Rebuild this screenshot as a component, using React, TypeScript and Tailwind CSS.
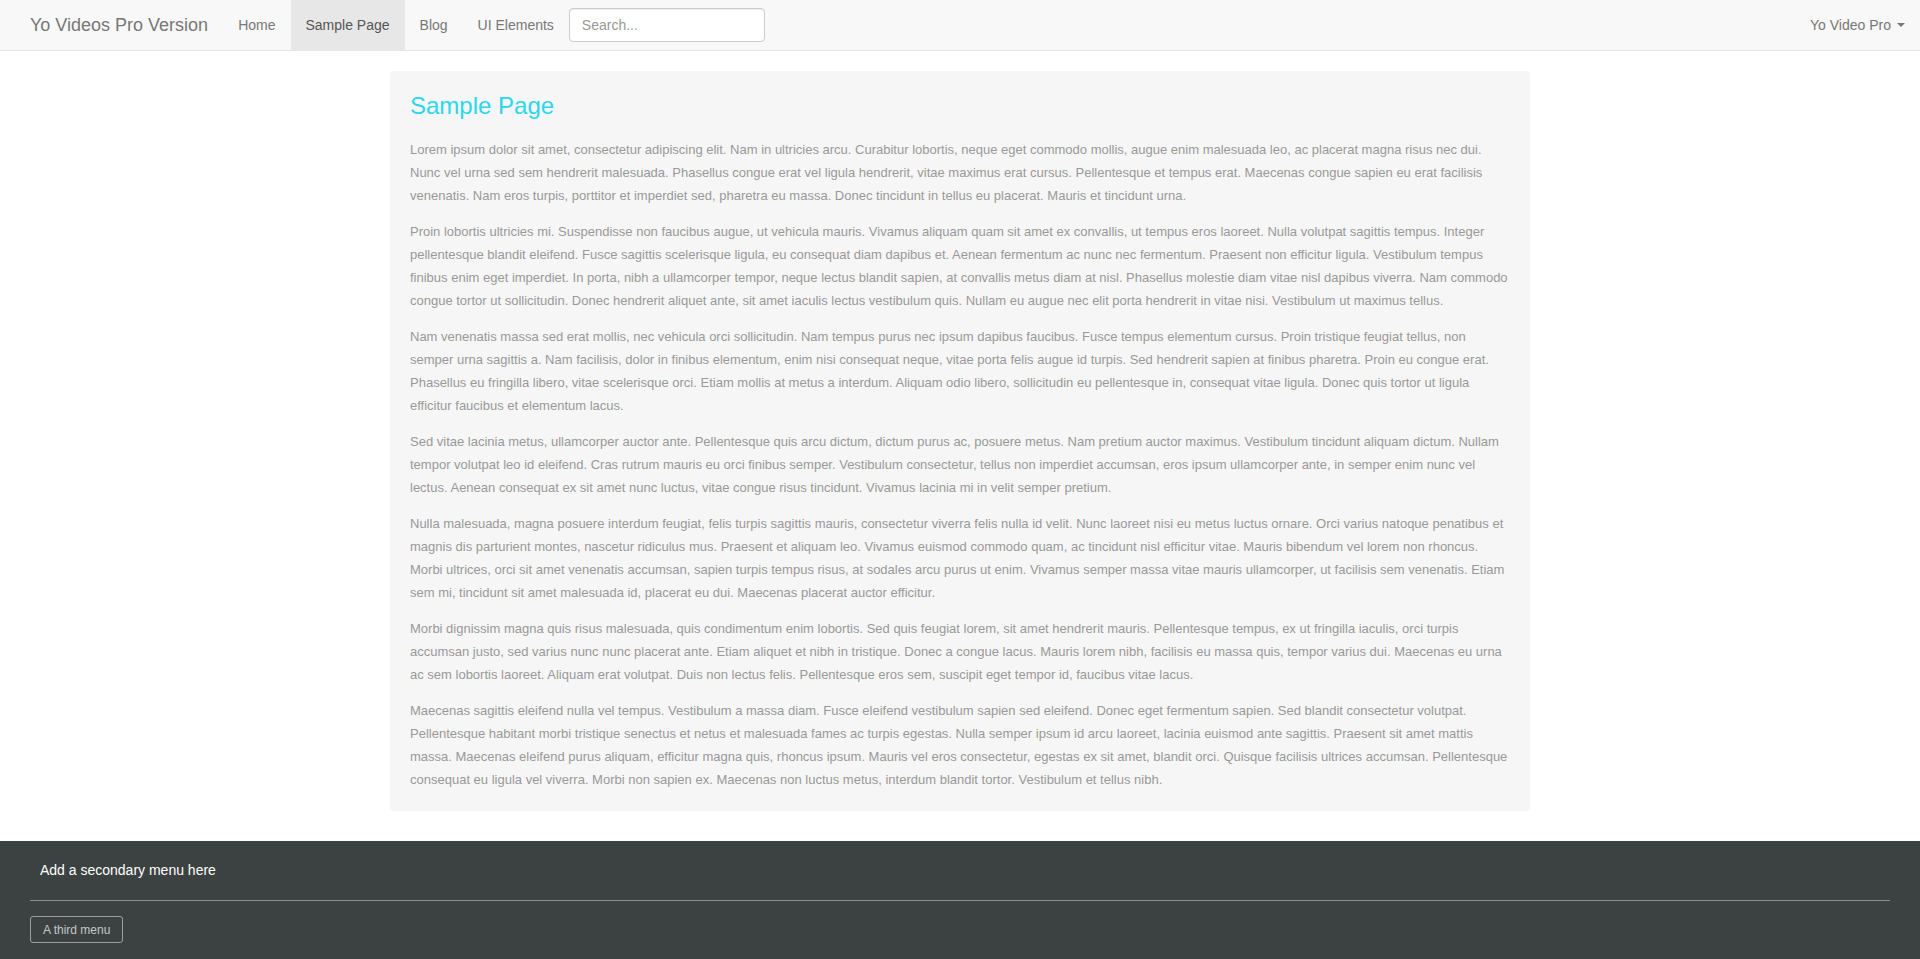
import React from 'react'

const paragraphs = [
  'Lorem ipsum dolor sit amet, consectetur adipiscing elit. Nam in ultricies arcu. Curabitur lobortis, neque eget commodo mollis, augue enim malesuada leo, ac placerat magna risus nec dui. Nunc vel urna sed sem hendrerit malesuada. Phasellus congue erat vel ligula hendrerit, vitae maximus erat cursus. Pellentesque et tempus erat. Maecenas congue sapien eu erat facilisis venenatis. Nam eros turpis, porttitor et imperdiet sed, pharetra eu massa. Donec tincidunt in tellus eu placerat. Mauris et tincidunt urna.',
  'Proin lobortis ultricies mi. Suspendisse non faucibus augue, ut vehicula mauris. Vivamus aliquam quam sit amet ex convallis, ut tempus eros laoreet. Nulla volutpat sagittis tempus. Integer pellentesque blandit eleifend. Fusce sagittis scelerisque ligula, eu consequat diam dapibus et. Aenean fermentum ac nunc nec fermentum. Praesent non efficitur ligula. Vestibulum tempus finibus enim eget imperdiet. In porta, nibh a ullamcorper tempor, neque lectus blandit sapien, at convallis metus diam at nisl. Phasellus molestie diam vitae nisl dapibus viverra. Nam commodo congue tortor ut sollicitudin. Donec hendrerit aliquet ante, sit amet iaculis lectus vestibulum quis. Nullam eu augue nec elit porta hendrerit in vitae nisi. Vestibulum ut maximus tellus.',
  'Nam venenatis massa sed erat mollis, nec vehicula orci sollicitudin. Nam tempus purus nec ipsum dapibus faucibus. Fusce tempus elementum cursus. Proin tristique feugiat tellus, non semper urna sagittis a. Nam facilisis, dolor in finibus elementum, enim nisi consequat neque, vitae porta felis augue id turpis. Sed hendrerit sapien at finibus pharetra. Proin eu congue erat. Phasellus eu fringilla libero, vitae scelerisque orci. Etiam mollis at metus a interdum. Aliquam odio libero, sollicitudin eu pellentesque in, consequat vitae ligula. Donec quis tortor ut ligula efficitur faucibus et elementum lacus.',
  'Sed vitae lacinia metus, ullamcorper auctor ante. Pellentesque quis arcu dictum, dictum purus ac, posuere metus. Nam pretium auctor maximus. Vestibulum tincidunt aliquam dictum. Nullam tempor volutpat leo id eleifend. Cras rutrum mauris eu orci finibus semper. Vestibulum consectetur, tellus non imperdiet accumsan, eros ipsum ullamcorper ante, in semper enim nunc vel lectus. Aenean consequat ex sit amet nunc luctus, vitae congue risus tincidunt. Vivamus lacinia mi in velit semper pretium.',
  'Nulla malesuada, magna posuere interdum feugiat, felis turpis sagittis mauris, consectetur viverra felis nulla id velit. Nunc laoreet nisi eu metus luctus ornare. Orci varius natoque penatibus et magnis dis parturient montes, nascetur ridiculus mus. Praesent et aliquam leo. Vivamus euismod commodo quam, ac tincidunt nisl efficitur vitae. Mauris bibendum vel lorem non rhoncus. Morbi ultrices, orci sit amet venenatis accumsan, sapien turpis tempus risus, at sodales arcu purus ut enim. Vivamus semper massa vitae mauris ullamcorper, ut facilisis sem venenatis. Etiam sem mi, tincidunt sit amet malesuada id, placerat eu dui. Maecenas placerat auctor efficitur.',
  'Morbi dignissim magna quis risus malesuada, quis condimentum enim lobortis. Sed quis feugiat lorem, sit amet hendrerit mauris. Pellentesque tempus, ex ut fringilla iaculis, orci turpis accumsan justo, sed varius nunc nunc placerat ante. Etiam aliquet et nibh in tristique. Donec a congue lacus. Mauris lorem nibh, facilisis eu massa quis, tempor varius dui. Maecenas eu urna ac sem lobortis laoreet. Aliquam erat volutpat. Duis non lectus felis. Pellentesque eros sem, suscipit eget tempor id, faucibus vitae lacus.',
  'Maecenas sagittis eleifend nulla vel tempus. Vestibulum a massa diam. Fusce eleifend vestibulum sapien sed eleifend. Donec eget fermentum sapien. Sed blandit consectetur volutpat. Pellentesque habitant morbi tristique senectus et netus et malesuada fames ac turpis egestas. Nulla semper ipsum id arcu laoreet, lacinia euismod ante sagittis. Praesent sit amet mattis massa. Maecenas eleifend purus aliquam, efficitur magna quis, rhoncus ipsum. Mauris vel eros consectetur, egestas ex sit amet, blandit orci. Quisque facilisis ultrices accumsan. Pellentesque consequat eu ligula vel viverra. Morbi non sapien ex. Maecenas non luctus metus, interdum blandit tortor. Vestibulum et tellus nibh.',
]

const links = ['Home', 'Sample Page', 'Blog', 'UI Elements']

const Navbar = () => {
  return (
    <nav className="flex h-[51px] items-start border-b border-[#e7e7e7] bg-[#f8f8f8] pl-[15px]">
      <a href="#" className="h-[50px] px-[15px] py-[15px] text-[18px] leading-[20px] text-[#777]">
        Yo Videos Pro Version
      </a>
      <ul className="flex">
        {links.map((link) => (
          <li key={link}>
            <a
              href="#"
              className={
                link === 'Sample Page'
                  ? 'block bg-[#e7e7e7] px-[15px] py-[15px] text-[14px] leading-[20px] text-[#555]'
                  : 'block px-[15px] py-[15px] text-[14px] leading-[20px] text-[#777]'
              }
            >
              {link}
            </a>
          </li>
        ))}
      </ul>
      <form className="mt-[8px]">
        <input
          type="text"
          placeholder="Search..."
          className="h-[34px] w-[196px] rounded-[4px] border border-[#ccc] bg-white px-[12px] text-[14px] text-[#555] shadow-[inset_0_1px_1px_rgba(0,0,0,0.075)] outline-none placeholder:text-[#999]"
        />
      </form>
      <a href="#" className="ml-auto flex items-center px-[15px] py-[15px] text-[14px] leading-[20px] text-[#777]">
        Yo Video Pro
        <span className="ml-[6px] inline-block h-0 w-0 border-x-4 border-t-4 border-x-transparent border-t-[#777]" />
      </a>
    </nav>
  )
}

const App = () => {
  return (
    <div className="min-h-screen bg-white font-['Liberation_Sans',Arial,sans-serif]">
      <Navbar />
      <main className="mx-auto mt-[20px] w-[1140px]">
        <section className="rounded-[4px] bg-[#f6f6f6] px-[20px] pt-[22px] pb-[20px]">
          <h3 className="mb-[19px] text-[24px] leading-[26.4px] text-[#2ad8ee]">Sample Page</h3>
          <div className="flex flex-col gap-[13px]">
            {paragraphs.map((p, i) => (
              <p key={i} className="text-[13px] leading-[23px] text-[#999]">
                {p}
              </p>
            ))}
          </div>
        </section>
      </main>
      <footer className="mt-[30px] bg-[#3c4242] px-[30px] pt-[9px] pb-[20px]">
        <div className="px-[10px] py-[10px] text-[14px] leading-[20px] text-white">Add a secondary menu here</div>
        <hr className="mt-[10px] border-t border-[#8a8f8f]" />
        <button className="mt-[15px] h-[27px] rounded-[3px] border border-[#9a9f9f] px-[12px] text-[12px] leading-[18px] text-[#c2c8c8]">
          A third menu
        </button>
      </footer>
    </div>
  )
}

export default App
